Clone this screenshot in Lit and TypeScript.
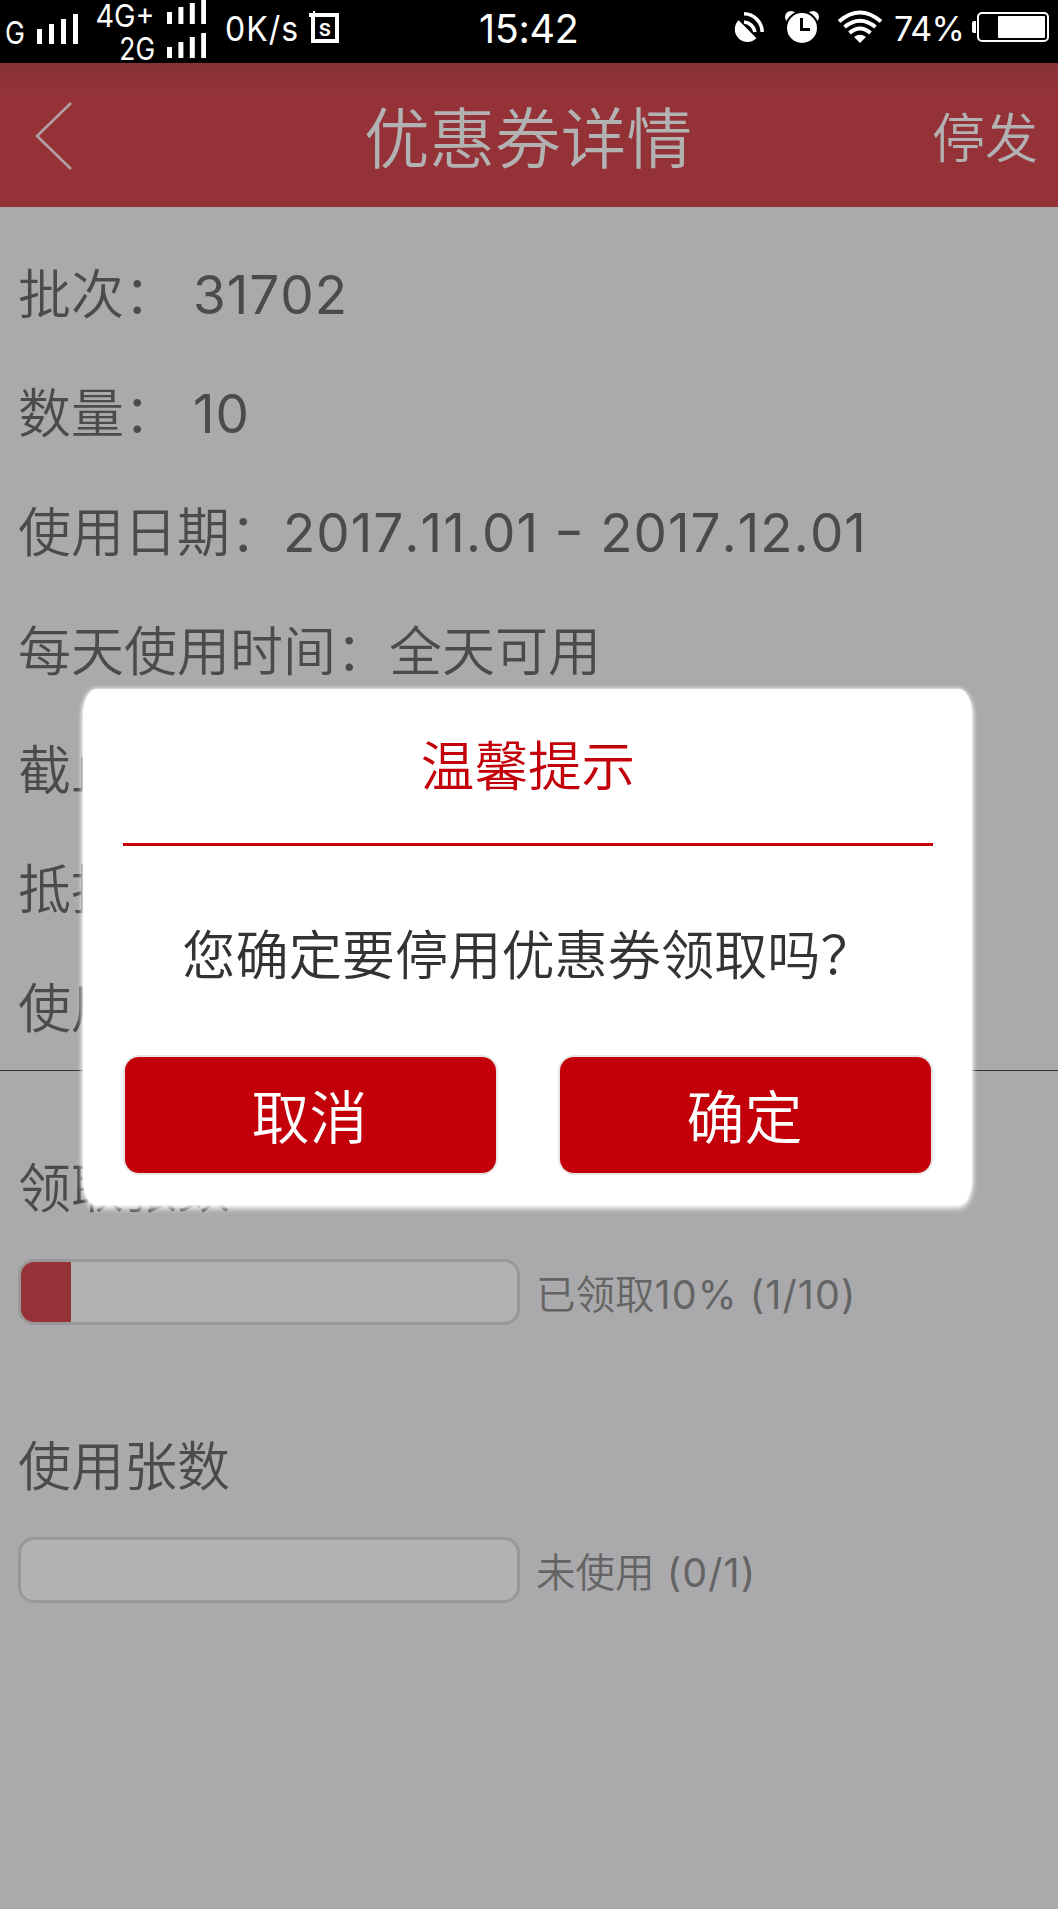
import { LitElement, html, svg, css } from "lit";
import { customElement, property } from "lit/decorators.js";

const bars = (heights: number[], pitch: number, barWidth: number) => {
  const h = heights[heights.length - 1];
  const w = pitch * (heights.length - 1) + barWidth;
  return html`<svg width=${w} height=${h} viewBox="0 0 ${w} ${h}" fill="#fff">
    ${heights.map((b, i) => svg`<rect x=${i * pitch} y=${h - b} width=${barWidth} height=${b} />`)}
  </svg>`;
};

@customElement("status-bar")
class StatusBar extends LitElement {
  static styles = css`
    :host { display: block; height: 63px; background: #000; color: #fff; }
    .bar { display: grid; grid-template-columns: 479px 255px 1fr; height: 63px; }
    .left, .right { display: flex; align-items: flex-start; }
    svg { display: block; flex: none; }
    span { white-space: pre; line-height: 40px; flex: none; }
    .g { font-size: 31px; width: 32px; padding-left: 5px; margin-top: 13px; transform-origin: 5px 50%; transform: scaleX(0.86); }
    .main-signal { margin-top: 14px; }
    .networks { display: flex; flex-direction: column; align-items: flex-end; width: 77px; height: 63px; }
    .networks span { font-size: 31px; height: 31px; line-height: 31px; transform-origin: 100% 50%; }
    .net4 { transform: scaleX(0.93); }
    .net2 { transform: scaleX(0.85); margin-top: 2px; }
    .signals { display: flex; flex-direction: column; gap: 9px; margin-left: 12px; }
    .rate { font-size: 34px; margin: 9px 0 0 19px; width: 85px; letter-spacing: 1.1px; transform-origin: 0 50%; transform: scaleX(0.94); }
    .sim { margin-top: 11px; margin-left: -2px; }
    .time { font-size: 39.5px; margin-top: 9px; letter-spacing: -0.3px; }
    .sat { margin-top: 11px; width: 51px; }
    .alarm { margin-top: 10px; width: 53px; }
    .wifi { margin-top: 10px; width: 56px; }
    .percent { font-size: 34px; margin-top: 9px; width: 78px; letter-spacing: -0.9px; }
    .battery { margin-top: 12px; }
  `;
  render() {
    return html`<div class="bar">
      <div class="left">
        <span class="g">G</span>
        <div class="main-signal">${bars([15, 20, 25, 30], 12, 5)}</div>
        <div class="networks"><span class="net4">4G+</span><span class="net2">2G</span></div>
        <div class="signals">${bars([12, 17, 21, 24], 11.4, 5)}${bars([11, 16, 21, 25], 11.4, 5)}</div>
        <span class="rate">0K/s</span>
        <svg class="sim" width="32" height="34" viewBox="0 0 32 34">
          <rect x="5" y="4" width="24" height="26" fill="none" stroke="#fff" stroke-width="4" />
          <path d="M1 2H5V0H7V6H1Z" fill="#fff" />
          <text x="17" y="24.5" text-anchor="middle" font-family="Roboto" font-weight="500" font-size="24" fill="#fff">s</text>
        </svg>
      </div>
      <span class="time">15:42</span>
      <div class="right">
        <svg class="sat" width="51" height="32" viewBox="0 0 51 32">
          <path d="M4.6 9.2A12.6 12.6 0 1 0 22.5 27.3Z" fill="#fff" />
          <path d="M10 11A12 12 0 0 1 21 21" fill="none" stroke="#fff" stroke-width="3.6" />
          <path d="M10 2.8A18.5 18.5 0 0 1 28.2 21" fill="none" stroke="#fff" stroke-width="3.6" />
        </svg>
        <svg class="alarm" width="53" height="34" viewBox="0 0 53 34">
          <circle cx="6" cy="7" r="6" fill="#fff" /><circle cx="28" cy="7" r="6" fill="#fff" />
          <circle cx="17" cy="18" r="17" fill="#000" /><circle cx="17" cy="18" r="15" fill="#fff" />
          <path d="M16.5 8V19.5H25" fill="none" stroke="#000" stroke-width="3" />
        </svg>
        <svg class="wifi" width="56" height="34" viewBox="0 0 56 34">
          <path d="M1 11.5Q22 -6.5 43 11.5M6.5 17Q22 4.5 37.5 17M11.5 23Q22 14 32.5 23" fill="none" stroke="#fff" stroke-width="4" />
          <path d="M16 27Q22 22.5 28 27L22 33Z" fill="#fff" />
        </svg>
        <span class="percent">74%</span>
        <svg class="battery" width="78" height="30" viewBox="0 0 78 30">
          <path d="M4 9H2Q0 9 0 11V19Q0 21 2 21H4Z" fill="#fff" />
          <rect x="6" y="1" width="70" height="28" rx="4" fill="none" stroke="#fff" stroke-width="2" />
          <rect x="26" y="4" width="47" height="22" rx="1" fill="#fff" />
        </svg>
      </div>
    </div>`;
  }
}

@customElement("coupon-progress")
class CouponProgress extends LitElement {
  @property() heading = "";
  @property() label = "";
  @property() count = "";
  @property({ type: Number }) percent = 0;
  static styles = css`
    :host { display: block; height: 278px; }
    .heading { height: 73px; line-height: 80px; padding: 78px 0 37px 18px; font-size: 53px; }
    .line { display: flex; align-items: center; padding-left: 18px; gap: 16px; }
    .track { box-sizing: border-box; width: 502px; height: 66px; border: 3px solid #989898; border-radius: 16px; background: #b2b2b2; overflow: hidden; flex: none; }
    .fill { height: 100%; background: #943238; }
    .caption { font-size: 39.5px; color: #646464; white-space: pre; line-height: 60px; padding-top: 5px; }
    .count { letter-spacing: 1.1px; font-kerning: none; font-weight: 380; }
  `;
  render() {
    return html`<div class="heading">${this.heading}</div>
      <div class="line">
        <div class="track"><div class="fill" style="width:${this.percent}%"></div></div>
        <span class="caption">${this.label}<span class="count">${this.count}</span></span>
      </div>`;
  }
}

@customElement("confirm-dialog")
class ConfirmDialog extends LitElement {
  static styles = css`
    :host { display: block; box-sizing: border-box; background: #fff; border-radius: 13px / 26px; padding: 0 39px 0 40px; box-shadow: 0 0 4px #fff, 0 3px 6px #fff; }
    .title { box-sizing: border-box; height: 157px; padding-top: 3px; line-height: 150px; text-align: center; color: #c30009; font-size: 53.6px; border-bottom: 3px solid #c30009; }
    .message { box-sizing: border-box; height: 211px; padding-top: 4px; line-height: 211px; text-align: center; color: #333; font-size: 53.2px; white-space: nowrap; }
    .actions { display: flex; justify-content: space-between; padding: 0 2px; }
    .button { box-sizing: border-box; width: 371px; height: 116px; line-height: 122px; padding-right: 2px; border-radius: 14px; background: #c30009; color: #fff; font-size: 58px; text-align: center; box-shadow: 0 0 0 2px #e8e8e8; }
  `;
  render() {
    return html`<div class="title">温馨提示</div>
      <div class="message">您确定要停用优惠券领取吗？</div>
      <div class="actions"><div class="button">取消</div><div class="button">确定</div></div>`;
  }
}

@customElement("app-root")
class AppRoot extends LitElement {
  static styles = css`
    :host { display: block; position: relative; width: 1058px; height: 1909px; overflow: hidden; background: #aaaaac; color: #4b4b4b;
      font-family: Inter, "Noto Sans CJK SC", sans-serif; font-weight: 350; }
    status-bar { font-weight: 400; }
    .header { display: grid; grid-template-columns: 200px 1fr 200px; align-items: center; height: 144px; color: #b2b2b2;
      background: linear-gradient(#863337, #943238 32px); }
    .back { display: block; margin: 2px 0 0 35px; }
    .title { text-align: center; font-size: 65.6px; line-height: 96px; padding-top: 8px; margin-left: -2px; }
    .stop { text-align: right; padding: 7px 20px 0 0; font-size: 53px; line-height: 80px; }
    .details { padding: 29px 0 1px 18px; border-bottom: 1px solid #333; }
    .row { height: 119px; line-height: 119px; font-size: 53px; white-space: pre; display: flex; }
    .numeric { font-kerning: none; letter-spacing: 1px; font-weight: 380; font-feature-settings: "case"; }
    .dash { display: inline-block; transform: scaleX(1.25); margin: 0 2px; }
    .dialog { position: absolute; left: 83px; top: 689px; width: 889px; height: 516px; }
  `;
  rows = [
    ["批次：", html`<span class="numeric"> 31702</span>`],
    ["数量：", html`<span class="numeric"> 10</span>`],
    ["使用日期：", html`<span class="numeric">2017.11.01 <span class="dash">-</span> 2017.12.01</span>`],
    ["每天使用时间：", "全天可用"],
    ["截止", ""],
    ["抵扣", ""],
    ["使用", ""],
  ];
  render() {
    return html`<status-bar></status-bar>
      <div class="header">
        <svg class="back" width="37" height="68" viewBox="0 0 37 68"><path d="M36 1L2 34L36 67" fill="none" stroke="#b2a0a1" stroke-width="2.6" /></svg>
        <div class="title">优惠券详情</div>
        <div class="stop">停发</div>
      </div>
      <div class="details">
        ${this.rows.map(([k, v]) => html`<div class="row"><span>${k}</span><span>${v}</span></div>`)}
      </div>
      <coupon-progress heading="领取张数" label="已领取" count="10% (1/10)" percent="10"></coupon-progress>
      <coupon-progress heading="使用张数" label="未使用" count=" (0/1)" percent="0"></coupon-progress>
      <confirm-dialog class="dialog"></confirm-dialog>`;
  }
}
